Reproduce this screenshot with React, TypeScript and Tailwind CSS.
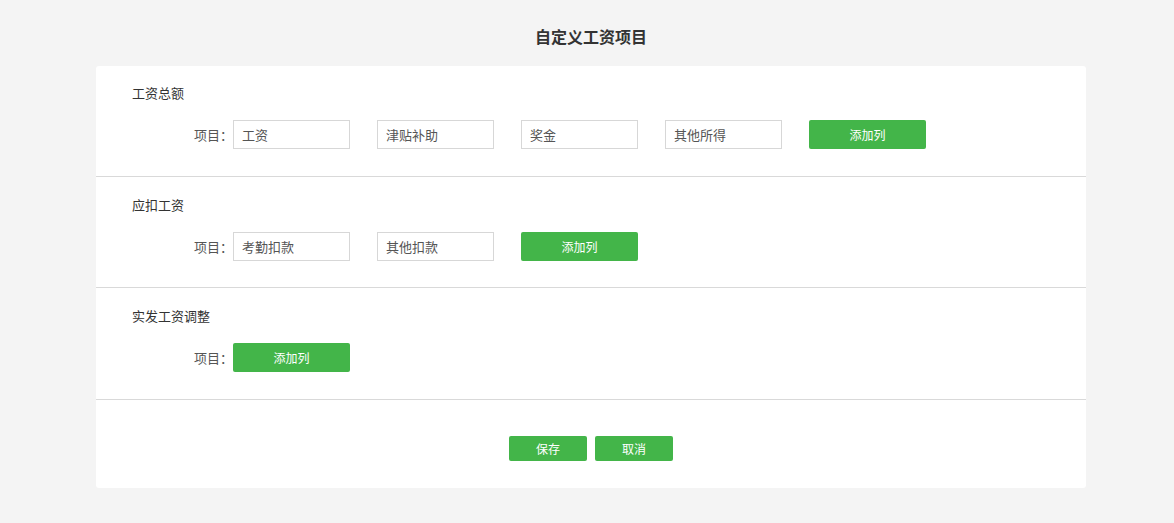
import React from 'react';

const font = { fontFamily: '"Microsoft YaHei", "Noto Sans CJK SC", "Liberation Sans", sans-serif' };

type Section = { title: string; items: string[] };

const sections: Section[] = [
  { title: '工资总额', items: ['工资', '津贴补助', '奖金', '其他所得'] },
  { title: '应扣工资', items: ['考勤扣款', '其他扣款'] },
  { title: '实发工资调整', items: [] },
];

function SectionBlock({ section, index }: { section: Section; index: number }) {
  const box =
    index === 0 ? 'h-[111px] pt-[18px]' : index === 1 ? 'h-[111px] pt-[19px]' : 'h-[112px] pt-[19px]';
  return (
    <div className={`${box} pl-9 border-b border-[#d9d9d9]`}>
      <div className="text-[13px] leading-[18px] text-[#333]">{section.title}</div>
      <div className="mt-[18px] flex items-center">
        <div className="w-[101px] text-right text-[13px] text-[#555]">项目：</div>
        <div className="flex gap-[27px]">
          {section.items.map((item) => (
            <input
              key={item}
              defaultValue={item}
              className="h-[29px] w-[117px] border border-[#d7d7d7] bg-white px-2 text-[13px] text-[#555] outline-none"
              style={font}
            />
          ))}
          <button className="h-[29px] w-[117px] rounded-[2px] bg-[#43b549] text-[12px] text-white" style={font}>
            添加列
          </button>
        </div>
      </div>
    </div>
  );
}

export default function App() {
  return (
    <div className="min-h-[523px] bg-[#f4f4f4] pt-[24px]" style={font}>
      <div className="ml-[96px] w-[990px]">
        <h1 className="text-center text-[16px] font-bold leading-[24px] text-[#333]">自定义工资项目</h1>
        <div className="mt-[18px] rounded-[3px] bg-white">
          {sections.map((s, i) => (
            <SectionBlock key={s.title} section={s} index={i} />
          ))}
          <div className="flex h-[88px] items-start justify-center gap-2 pt-9">
            <button className="h-[25px] w-[78px] rounded-[2px] bg-[#43b549] text-[12px] text-white" style={font}>
              保存
            </button>
            <button className="h-[25px] w-[78px] rounded-[2px] bg-[#43b549] text-[12px] text-white" style={font}>
              取消
            </button>
          </div>
        </div>
      </div>
    </div>
  );
}
